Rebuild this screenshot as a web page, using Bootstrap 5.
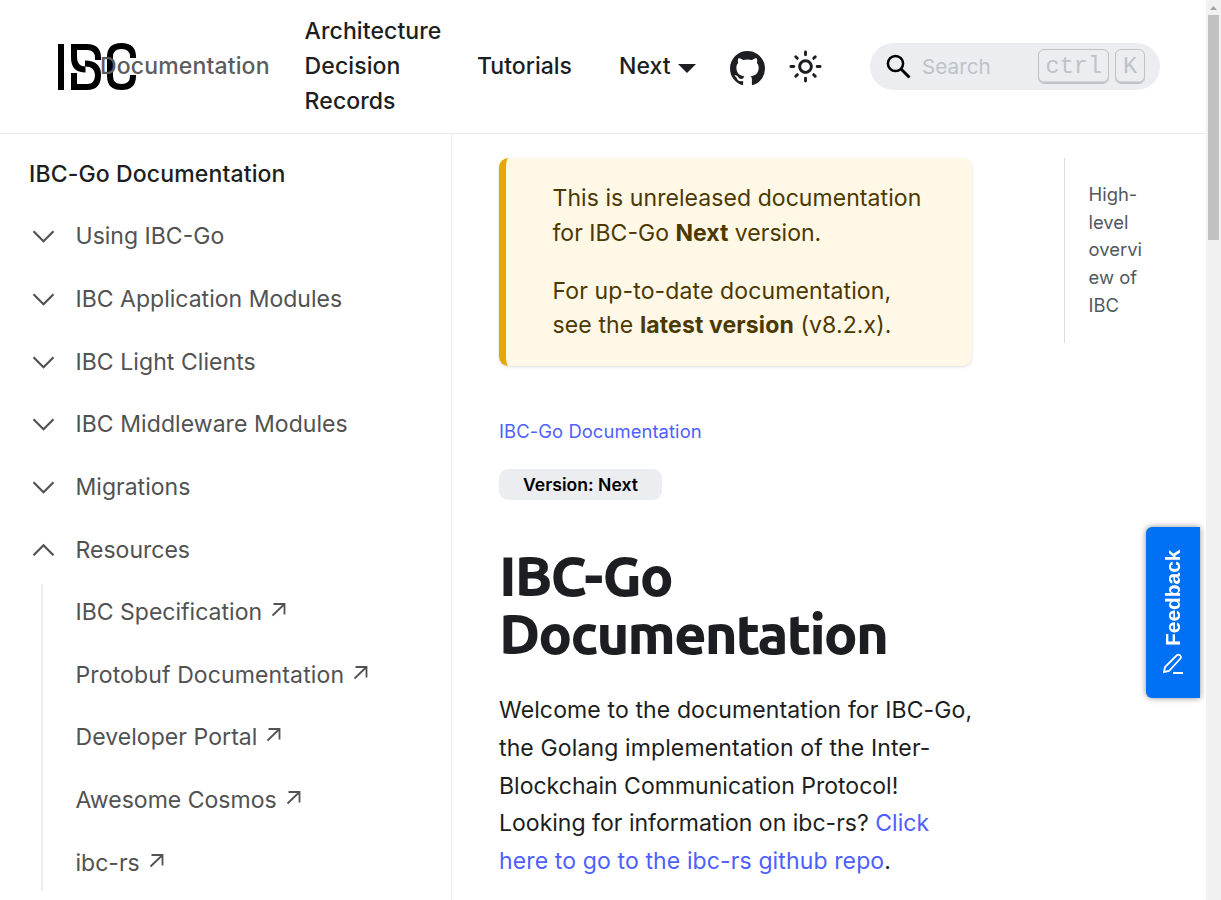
<!DOCTYPE html>
<html lang="en">
<head>
<meta charset="utf-8">
<title>IBC-Go Documentation</title>
<link href="https://cdn.jsdelivr.net/npm/bootstrap@5.3.0/dist/css/bootstrap.min.css" rel="stylesheet">
<style>
html,body{height:100%;overflow:hidden}
body{font-family:Inter,"Liberation Sans",sans-serif;font-size:23.04px;line-height:35px;color:#1c1e21;background:#fff;text-rendering:optimizeLegibility}
a{text-decoration:none;color:inherit}
.page{width:1206px;height:900px;overflow:hidden}
.topbar{height:134px;border-bottom:1px solid #ebedf0;padding:0 46px 0 57px}
.brand-logo{width:43px;flex:none}
.brand-logo svg{display:block;overflow:visible}
.nav-text{font-weight:500}
.c-active{color:#5c5c5e}
.nav-doc{position:relative;width:170px;margin-right:34.600px;flex:none;letter-spacing:.13px}
.nav-adr{width:138px;margin-right:34.400px;flex:none;letter-spacing:.08px}
.nav-tut{width:96px;margin-right:46px}
.caret{border:9px solid transparent;border-top:9px solid #1c1e21;border-bottom:0;margin-left:7px;margin-top:3px}
.gh{margin:3px 23px 0 34.400px}
.gh svg,.sun{display:block}
.search{width:290px;height:47px;background:#ebedf0;border-radius:24px;padding:0 15px 0 16px;color:#bec3c9}
.s-label{margin-left:11px;font-size:20.736px}
.search kbd{font:23.5px/30px "Liberation Mono",monospace;color:#bec3c9;background:none;border:1px solid #bec3c9;border-radius:6px;box-shadow:inset 0 -1.5px 0 #bec3c9;padding:1.500px 6px 0 7px;height:35px}
.search .k2{margin-left:6px;width:30px}
.side{width:452px;height:766px;border-right:1px solid #ebedf0;padding:0 0 0 29px;color:#525252}
.side-title{font-weight:500;color:#1c1e21;padding-top:23px;height:71px;letter-spacing:.12px}
.side-item{height:62.650px;padding-top:14.300px}
.side-item svg{margin:-1px 19.500px 0 0;width:27px;flex:none}
.sub{border-left:2px solid #ebebeb;margin-left:12px;padding-left:32.500px;height:307px;margin-top:3px}
.sub .side-item{padding-top:11.200px}
.sub .side-item svg{width:16px;margin:-3px 0 0 9px}
.main-col{width:520px;padding:24px 0 0 47px;flex:none}
.notice{width:473px;height:208px;background:#fff8e6;border-left:7px solid #e6a700;border-radius:9.4px;box-shadow:0 1px 3px rgba(0,0,0,.15);color:#4d3800;padding:23px 0 0 46.500px;line-height:34.6px}
.notice p{margin-bottom:23.500px}
.wide{letter-spacing:.11px}
.wide-sm{letter-spacing:.05px}
.linkc{color:#4f5fff}
.crumb{font-size:18.432px;margin-top:48px;letter-spacing:.07px}
.pill{width:163px;height:31px;border-radius:9px;background:#ebedf0;color:#000;font-weight:600;font-size:17.6px;line-height:31px;margin-top:20px}
h1{font-family:Ubuntu,"Noto Sans",sans-serif;font-weight:800;font-size:56px;line-height:58px;margin:47px 0 29px;letter-spacing:-1.920px}
.intro{line-height:37.75px;white-space:nowrap}
.toc{margin:24px 0 0 92px;height:185px;border-left:1px solid #dadde1;padding:23px 0 0 23.500px;font-size:18.432px;line-height:27.7px;color:#525860}
.feedback{position:fixed;left:1146px;top:527px;width:54px;height:171px;background:#0070f5;border-radius:6px 0 0 6px;box-shadow:0 0 6px rgba(0,0,0,.45);color:#fff;padding-top:22px}
.feedback span{writing-mode:vertical-rl;transform:rotate(180deg);font:700 20.900px/24px "Liberation Sans",sans-serif;height:97px}
.feedback svg{margin-top:7px}
.track{position:fixed;right:0;top:0;width:15px;height:900px;background:#f1f1f1}
.thumb{width:11px;height:225px;margin:15px 0 0 2px;background:#c1c1c1}
.track svg{position:absolute;left:0;top:0}
</style>
</head>
<body>
<svg class="d-none">
<symbol id="down" viewBox="0 0 27 27"><path d="M4.500 9.300l10 10 10-10" fill="none" stroke="#525252" stroke-width="2.200"/></symbol>
<symbol id="up" viewBox="0 0 27 27"><path d="M4.500 19.300l10-10 10 10" fill="none" stroke="#525252" stroke-width="2.200"/></symbol>
<symbol id="ext" viewBox="0 0 16 16"><path d="M2.500 2.500h11v10.500M13.500 2.500L1.500 14" fill="none" stroke="#525252" stroke-width="1.8"/></symbol>
</svg>
<div class="page">
<nav class="topbar d-flex align-items-center">
 <div class="brand-logo"><svg width="80" height="48" viewBox="0 0 80 48"><g fill="none" stroke="#000" stroke-width="6"><path d="M4 1v46"/><path d="M41 17v-2Q41 4 30 4H17v10.500Q17 26.500 28.500 26.500"/><path d="M28 20.500Q41 20.500 41 32Q41 44 30 44H17V30"/><path d="M76 15v-1Q76 3 64.500 3T53 14v19Q53 44 64.500 44T76 33v-1"/></g></svg></div>
 <a class="nav-doc nav-text c-active" href="#">Documentation</a>
 <a class="nav-adr nav-text" href="#">Architecture Decision Records</a>
 <a class="nav-tut nav-text" href="#">Tutorials</a>
 <a class="nav-text d-flex align-items-center" href="#">Next<i class="caret"></i></a>
 <a href="#" class="gh"><svg width="35" height="35" viewBox="0 0 16 16" fill="#1c1e21"><path d="M8 0C3.580 0 0 3.580 0 8c0 3.540 2.290 6.530 5.470 7.590.4.070.55-.17.55-.38 0-.19-.01-.82-.01-1.490-2.010.37-2.530-.49-2.690-.94-.09-.23-.48-.94-.82-1.130-.28-.15-.68-.52-.01-.53.63-.01 1.080.58 1.230.82.72 1.210 1.870.87 2.330.66.07-.52.28-.87.51-1.070-1.780-.2-3.640-.89-3.640-3.950 0-.87.31-1.590.82-2.150-.08-.2-.36-1.020.08-2.120 0 0 .67-.21 2.200.82a7.600 7.600 0 0 1 4 0c1.530-1.040 2.200-.82 2.200-.82.44 1.100.16 1.920.08 2.120.51.56.82 1.270.82 2.150 0 3.070-1.870 3.750-3.650 3.950.29.25.54.73.54 1.480 0 1.070-.01 1.930-.01 2.200 0 .21.15.46.55.38A8 8 0 0 0 16 8c0-4.420-3.580-8-8-8z"/></svg></a>
 <svg class="sun" width="35" height="35" viewBox="0 0 24 24" fill="#1c1e21"><path d="M12,9c1.650,0,3,1.350,3,3s-1.350,3-3,3s-3-1.350-3-3S10.350,9,12,9 M12,7c-2.760,0-5,2.240-5,5s2.240,5,5,5s5-2.240,5-5 S14.760,7,12,7z"/><path d="M2 12h2M20 12h2M12 2v2M12 20v2M5.300 5.300l1.100 1.100M17.600 17.600l1.100 1.100M5.300 18.700l1.100-1.100M17.600 6.400l1.100-1.100" stroke="#1c1e21" stroke-width="2" stroke-linecap="round"/></svg>
 <div class="search d-flex align-items-center ms-auto">
  <svg width="25" height="25" viewBox="0 0 25 25"><circle cx="9.500" cy="9.500" r="7.600" fill="none" stroke="#000" stroke-width="2.500"/><path d="M15 15l8.500 8.500" stroke="#000" stroke-width="3"/></svg>
  <span class="s-label">Search</span><kbd class="ms-auto">ctrl</kbd><kbd class="k2">K</kbd>
 </div>
</nav>
<div class="d-flex">
 <aside class="side">
  <div class="side-title">IBC-Go Documentation</div>
  <div class="side-item d-flex"><svg height="35"><use href="#down"/></svg>Using IBC-Go</div>
  <div class="side-item d-flex"><svg height="35"><use href="#down"/></svg>IBC Application Modules</div>
  <div class="side-item d-flex wide-sm"><svg height="35"><use href="#down"/></svg>IBC Light Clients</div>
  <div class="side-item d-flex wide-sm"><svg height="35"><use href="#down"/></svg>IBC Middleware Modules</div>
  <div class="side-item d-flex"><svg height="35"><use href="#down"/></svg>Migrations</div>
  <div class="side-item d-flex"><svg height="35"><use href="#up"/></svg>Resources</div>
  <div class="sub">
   <div class="side-item d-flex">IBC Specification<svg height="35"><use href="#ext"/></svg></div>
   <div class="side-item d-flex wide">Protobuf Documentation<svg height="35"><use href="#ext"/></svg></div>
   <div class="side-item d-flex wide-sm">Developer Portal<svg height="35"><use href="#ext"/></svg></div>
   <div class="side-item d-flex">Awesome Cosmos<svg height="35"><use href="#ext"/></svg></div>
   <div class="side-item d-flex">ibc-rs<svg height="35"><use href="#ext"/></svg></div>
  </div>
 </aside>
 <main class="main-col">
  <div class="notice"><p><span class="wide-sm">This is unreleased documentation</span><br>for IBC-Go <b>Next</b> version.</p><p class="wide">For up-to-date documentation,<br>see the <b>latest version</b> (v8.2.x).</p></div>
  <div class="crumb linkc">IBC-Go Documentation</div>
  <div class="pill text-center">Version: Next</div>
  <h1>IBC-Go<br>Documentation</h1>
  <p class="intro"><span class="wide">Welcome to the documentation for IBC-Go,<br>the Golang implementation of the Inter-</span><br>Blockchain Communication Protocol!<br>Looking for information on ibc-rs? <a class="linkc" href="#">Click<br><span class="wide">here to go to the ibc-rs github repo</span></a>.</p>
 </main>
 <div class="toc">High-<br>level<br>overvi<br>ew of<br>IBC</div>
</div>
</div>
<div class="feedback d-flex flex-column align-items-center"><span>Feedback</span><svg width="22" height="22" viewBox="0 0 22 22"><path d="M2 19l1-5L15 2q3-1 4 2 0 1-1 2L7 18z M11 20h10" fill="none" stroke="#fff" stroke-width="1.800"/></svg></div>
<div class="track"><svg width="15" height="15"><path d="M4 10l3.500-4L11 10z" fill="#a3a3a3"/></svg><div class="thumb"></div></div>
<script src="https://cdn.jsdelivr.net/npm/bootstrap@5.3.0/dist/js/bootstrap.bundle.min.js"></script>
</body>
</html>
